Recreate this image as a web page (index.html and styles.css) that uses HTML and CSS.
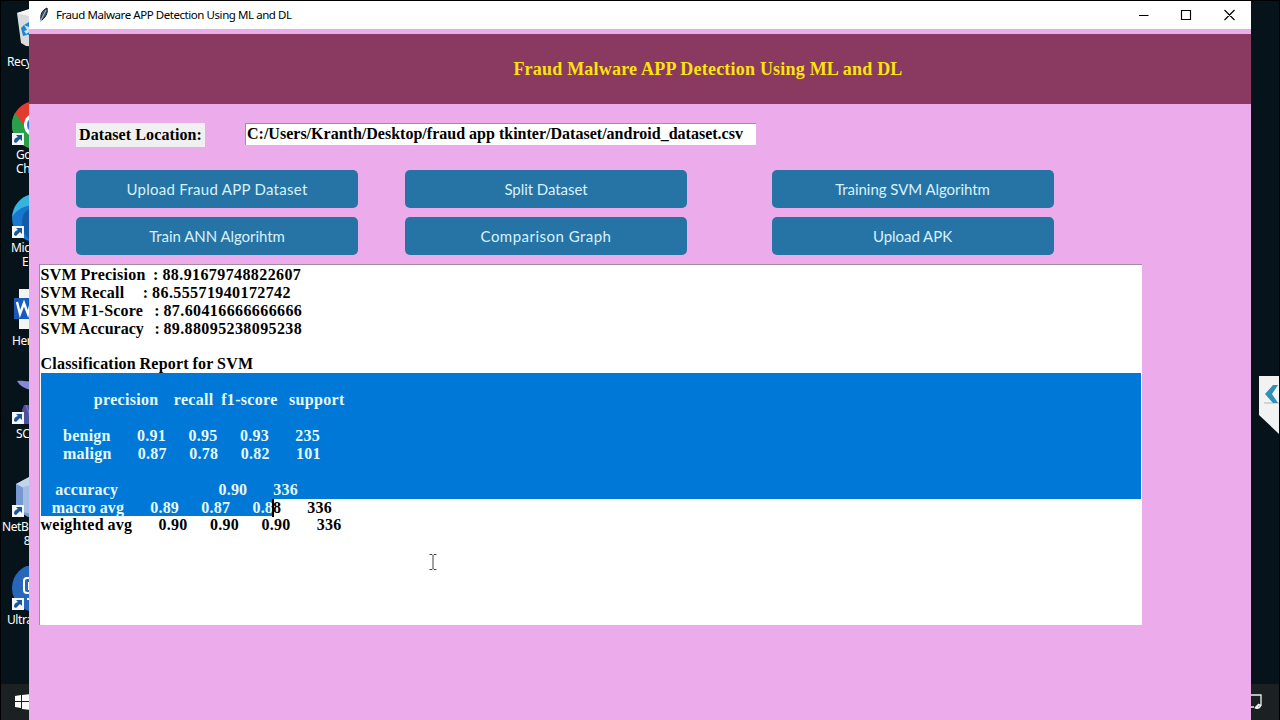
FILE: index.html
```
<!DOCTYPE html>
<html lang="en">
  <head>
    <meta charset="UTF-8" />
    <meta name="viewport" content="width=device-width, initial-scale=1.0" />
    <title>Fraud Malware APP Detection Using ML and DL</title>
    <link rel="stylesheet" href="styles.css">
  </head>
  <body>
    <div class="desktop">
      <div class="shortcuts">
        <div class="shortcut">
          <svg width="48" height="48" viewBox="0 0 48 48">
            <path d="M5 5l12-3 26 2-5 35-24-1-5-3z" fill="#d9dcde" />
            <path d="M5 5l12-4 27 3-27 4z" fill="#f4f5f5" />
            <path d="M12 17l5-3v5zM9 20l3-3 3 5-3 1 3 4-4 1zM14 26l5-3v5z" fill="#1787d2" />
          </svg>
          <div class="label recycle">Recy</div>
        </div>
        <div class="shortcut">
          <svg width="48" height="48" viewBox="0 0 48 48">
            <circle cx="24" cy="24" r="24" fill="#e33b2e" />
            <path d="M3 12a24 24 0 0 0 21 36l-8-18z" fill="#28a04a" />
            <circle cx="24" cy="24" r="12" fill="#fff" />
            <circle cx="24" cy="24" r="9" fill="#2f73dc" />
            <use href="#arrow" />
          </svg>
          <div class="label google">Go
Ch</div>
        </div>
        <div class="shortcut">
          <svg width="48" height="48" viewBox="0 0 48 48">
            <circle cx="24" cy="24" r="24" fill="#1878ce" />
            <path d="M0 23C2 8 12 0 24 0v11C13 11 5 15 0 23z" fill="#36b4df" />
            <path d="M10 28c0-9 5-14 14-14v34c-8-1-14-9-14-20z" fill="#125ba9" />
            <use href="#arrow" />
          </svg>
          <div class="label edge">Mic
    E</div>
        </div>
        <div class="shortcut">
          <svg width="48" height="48" viewBox="0 0 48 48">
            <rect x="7" y="2" width="34" height="40" fill="#f4f4f4" />
            <rect x="2" y="11" width="24" height="21" fill="#185abd" />
            <path d="M5 15l3 12 4-11 4 11 3-12" fill="none" stroke="#fff" stroke-width="2.4" />
          </svg>
          <div class="label word">Her</div>
        </div>
        <div class="shortcut">
          <svg width="48" height="48" viewBox="0 0 48 48">
            <path d="M5 1c5-1 9 1 15 0v9C13 9 8 6 5 1z" fill="#8987d8" />
            <path d="M10 30l2-5h8v19h-8z" fill="#514f9c" />
            <path d="M14 25l3 8 1 10" fill="none" stroke="#8582c9" />
            <use href="#arrow" />
          </svg>
          <div class="label sql">SC</div>
        </div>
        <div class="shortcut">
          <svg width="48" height="48" viewBox="0 0 48 48">
            <path d="M4 11L19 3l22 7v28l-25 6-12-7z" fill="#7898d2" />
            <path d="M4 11L19 3v9l-7 3z" fill="#c4d5ea" />
            <path d="M11 14l8-2v29l-8-2z" fill="#a5bde2" />
            <use href="#arrow" />
          </svg>
          <div class="label net">NetBe
        8</div>
        </div>
        <div class="shortcut">
          <svg width="48" height="48" viewBox="0 0 48 48">
            <circle cx="24" cy="22" r="24" fill="#2766b9" />
            <rect x="12" y="12" width="25" height="15" rx="3" fill="none" stroke="#fff" stroke-width="2" />
            <path d="M17 16v8M15 33h7" stroke="#fff" stroke-width="2" />
            <use href="#arrow" />
          </svg>
          <div class="label ultra">Ultra</div>
        </div>
      </div>

      <div class="taskbar">
        <svg width="16" height="16" viewBox="0 0 16 16">
          <path d="M0 2l6-1v6H0zM7 1l9-1v7H7zM0 8h6v6l-6-1zM7 8h9v8l-9-1z" fill="#fff" />
        </svg>
        <svg width="12" height="18" viewBox="0 0 12 18">
          <path d="M0 2h10v11M0 14h3" fill="none" stroke="#f0f0f0" stroke-width="1.3" />
          <path d="M4 15l4-4M5 15c4 1 6-4 3-3z" fill="none" stroke="#f0f0f0" stroke-width="1.5" />
        </svg>
      </div>

      <svg class="side-tab" width="20" height="58" viewBox="0 0 20 58">
        <path d="M0 0h20v58L0 39z" fill="#f1f2f2" />
        <path d="M5 27h15" stroke="#b2b5b6" />
        <path d="M6 18l8-9h5l-6 9 6 9h-5z" fill="#348fb7" />
      </svg>

      <!-- shortcut arrow used by the icons -->
      <svg class="defs" width="0" height="0">
        <g id="arrow">
          <rect x="0" y="32" width="12" height="12" fill="#f3f6f8" />
          <path d="M4 34h6v6l-2-2-4 4-2-1c0-3 1-4 4-5z" fill="#1b5696" />
        </g>
      </svg>

      <div class="window">
        <div class="title-bar">
          <svg class="feather" width="12" height="16" viewBox="0 0 12 16">
            <path d="M3 13C2 8 4 3 9 1c1 3 0 8-5 12z" fill="#3c4f68" stroke="#17202a" />
            <path d="M2 15L8 3" stroke="#a9bfd8" />
          </svg>
          <span class="title">Fraud Malware APP Detection Using ML and DL</span>
          <svg class="controls" width="96" height="12" viewBox="0 0 96 12">
            <path d="M0 6.5h9.5M42.5 1.5h9v9h-9zM85.5 1l10 10M95.5 1l-10 10" fill="none" stroke="#000" stroke-width="1.15" />
          </svg>
        </div>

        <h1 class="banner">Fraud Malware APP Detection Using ML and DL</h1>

        <div class="location">
          <label class="location-label">Dataset Location:</label>
          <div class="location-path">C:/Users/Kranth/Desktop/fraud app tkinter/Dataset/android_dataset.csv</div>
        </div>

        <div class="buttons">
          <button class="wide">Upload Fraud APP Dataset</button>
          <button>Split Dataset</button>
          <button>Training SVM Algorihtm</button>
          <button>Train ANN Algorihtm</button>
          <button class="wider">Comparison Graph</button>
          <button>Upload APK</button>
        </div>

        <div class="output">
          <div class="line">SVM Precision  : <span class="num">88.91679748822607</span></div>
          <div class="line tight">SVM Recall     : <span class="num">86.55571940172742</span></div>
          <div class="line tight">SVM F1-Score   : <span class="num">87.60416666666666</span></div>
          <div class="line tighter">SVM Accuracy   : <span class="num">89.88095238095238</span></div>
          <div class="line"></div>
          <div class="line tight">Classification Report for SVM</div>
          <div class="line selected"></div>
          <div class="line selected loose">              precision    recall  f1-score   support</div>
          <div class="line selected"></div>
          <div class="line selected">      benign       0.91      0.95      0.93       235</div>
          <div class="line selected">      malign       0.87      0.78      0.82       101</div>
          <div class="line selected"></div>
          <div class="line selected tight">    accuracy                           0.90       336</div>
          <div class="line tight"><span class="selected part">   macro avg       0.89      0.87      0.8</span><span class="caret"></span>8       336</div>
          <div class="line">weighted avg       0.90      0.90      0.90       336</div>
          <svg class="cursor" width="8" height="16" viewBox="0 0 8 16">
            <path d="M0.5 0.5h2.5l1 1 1-1h2.5M4 1.5v13M0.5 15.5h2.5l1-1 1 1h2.5" fill="none" stroke="#444" />
          </svg>
        </div>
      </div>
    </div>
  </body>
</html>
```
FILE: styles.css
```
* {
  margin: 0;
  padding: 0;
  box-sizing: border-box;
}

body {
  background: #000;
}

.desktop {
  position: relative;
  width: 1280px;
  height: 720px;
  overflow: hidden;
  background: #07131b;
  border: 1px solid #000;
  border-bottom: 0;
}

.shortcuts {
  width: 72px;
  padding-top: 7px;
}

.shortcut {
  height: 93px;
  padding-left: 11px;
}

.shortcut svg {
  display: block;
  margin-bottom: -1px;
}

.label {
  font: 12px/14px "Noto Sans", sans-serif;
  color: #fff;
  letter-spacing: -0.4px;
  white-space: pre;
}

.recycle,
.ultra {
  margin-left: -5px;
}

.google,
.sql {
  margin-left: 4px;
}

.edge {
  margin-left: -1px;
}

.net {
  margin-left: -10px;
}

.taskbar {
  position: absolute;
  left: 0;
  right: 0;
  bottom: 0;
  height: 36px;
  padding: 0 16px 0 14px;
  display: flex;
  align-items: center;
  justify-content: space-between;
  background: #1b2122;
}

.side-tab {
  position: absolute;
  right: 0;
  top: 375px;
}

.defs {
  position: absolute;
}

.window {
  position: absolute;
  left: 28px;
  top: 0;
  width: 1222px;
  height: 719px;
  background: #ecabea;
}

.title-bar {
  height: 28px;
  display: flex;
  align-items: center;
  padding: 0 16px 1px 9px;
  background: #fff;
}

.title {
  margin-left: 6px;
  font: 11.5px "Noto Sans", sans-serif;
  letter-spacing: -0.44px;
}

.controls {
  margin-left: auto;
}

.banner {
  height: 70px;
  margin-top: 5px;
  padding-left: 136px;
  background: #8a3a60;
  color: #fbe30c;
  font: bold 18px/71px "Liberation Serif", serif;
  letter-spacing: 0.21px;
  text-align: center;
}

.location {
  display: flex;
  align-items: flex-start;
  padding: 19px 0 0 47px;
  height: 66px;
  font: bold 16px "Liberation Serif", serif;
}

.location-label {
  width: 129px;
  height: 24px;
  padding-left: 3px;
  line-height: 24px;
  background: #f0f0f0;
  letter-spacing: 0.1px;
}

.location-path {
  width: 511px;
  height: 22px;
  margin-left: 40px;
  padding-left: 1px;
  border-top: 1px solid #a38ba3;
  border-left: 1px solid #a38ba3;
  line-height: 20px;
  letter-spacing: 0.01px;
  background: #fff;
  white-space: nowrap;
}

.buttons {
  display: grid;
  grid-template-columns: 329px 366.5px 282px;
  grid-auto-rows: 38px;
  row-gap: 9px;
  padding-left: 47px;
}

.buttons button {
  width: 282px;
  border: 0;
  border-radius: 5px;
  background: #2574a5;
  color: #d8f1fd;
  font: 15px Lato, sans-serif;
  letter-spacing: -0.05px;
}

.buttons .wide {
  letter-spacing: 0.28px;
}

.buttons .wider {
  letter-spacing: 0.48px;
}

.output {
  position: relative;
  width: 1103px;
  height: 361px;
  margin: 9px 0 0 9.5px;
  padding: 1px 1px 0 1px;
  border-top: 1px solid #a38ba3;
  border-left: 1px solid #a38ba3;
  background: #fff;
  font: bold 16px/17.9px "Liberation Serif", serif;
  letter-spacing: 0.25px;
  word-spacing: -0.5px;
}

.line {
  height: 17.9px;
  white-space: pre;
}

.tight {
  letter-spacing: 0.21px;
}

.tighter {
  letter-spacing: 0.03px;
}

.loose {
  letter-spacing: 0.31px;
}

.num {
  letter-spacing: 0.4px;
}

.selected {
  background: #0078d7;
  color: #e4faff;
}

.part {
  display: inline-block;
  height: 17.9px;
}

.caret {
  display: inline-block;
  width: 2px;
  height: 18px;
  margin: 0 -1px;
  background: #000;
  vertical-align: top;
}

/* mouse pointer over the text */
.cursor {
  position: absolute;
  left: 389px;
  top: 289px;
}
```
